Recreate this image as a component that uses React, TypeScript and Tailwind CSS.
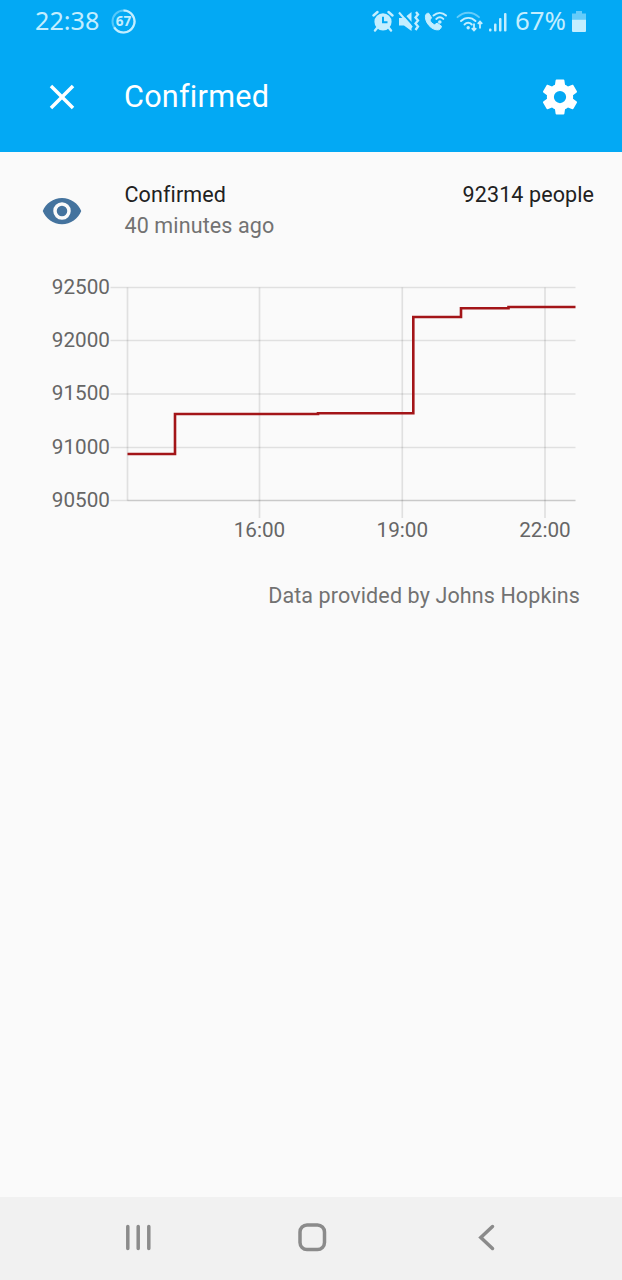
import React from "react";

interface Tick {
  label: string;
  pos: number;
}

// Positions are relative to the chart's svg
const yTicks: Tick[] = [
  { label: "92500", pos: 17.5 },
  { label: "92000", pos: 70.5 },
  { label: "91500", pos: 124 },
  { label: "91000", pos: 177.5 },
  { label: "90500", pos: 230.5 },
];

const xTicks: Tick[] = [
  { label: "16:00", pos: 259.5 },
  { label: "19:00", pos: 402.3 },
  { label: "22:00", pos: 545 },
];

const AlarmIcon = () => (
  <svg width="22" height="24" viewBox="0 0 22 24" fill="none">
    <circle cx="11" cy="11.8" r="8.600" fill="#c3eeff" />
    <path
      d="M1.500 5.500 5.500 2M20.500 5.500 16.500 2M5 18l-2 2.500M17 18l2 2.500"
      stroke="#c3eeff"
      strokeWidth="2.400"
      strokeLinecap="round"
    />
    <path d="M11 6.800V12.300h4.500" stroke="#03a9f4" strokeWidth="2" />
  </svg>
);

const VibrateIcon = () => (
  <svg width="22" height="24" viewBox="0 0 22 24" fill="none">
    <path d="M1 8h5l7.500-6v19L6 15.500H1z" fill="#c3eeff" />
    <path d="M2 .500 15 15" stroke="#03a9f4" strokeWidth="2" />
    <path d="M0 .500H6L4.500 5H0z" fill="#03a9f4" />
    <path d="m1 2.500 13 15" stroke="#c3eeff" strokeWidth="2" />
    <path
      d="m18 2 2 2.500-2.500 3 2.500 3-2.500 3 2.500 3-2.500 3.500"
      stroke="#c3eeff"
      strokeWidth="2.300"
    />
  </svg>
);

const WifiCallIcon = () => (
  <svg width="24" height="24" viewBox="0 0 24 24" fill="none">
    <path
      d="M1.500 5.200c.6-1.400 2-2.200 3.200-2l2.900 4.500-1.700 2.300c.9 2.300 2.500 3.900 4.700 4.800l2.500-1.700 4.300 3c0 1.700-1 3.200-2.700 3.700C7.800 21 .200 12 1.500 5.200z"
      fill="#c3eeff"
      stroke="#c3eeff"
      strokeWidth="1"
      strokeLinejoin="round"
    />
    <path
      d="M9.500 5.500c3.800-3.400 8.800-3.400 12.500 0M12.300 8.900c2.200-2 4.900-2 7 0"
      stroke="#c3eeff"
      strokeWidth="2"
      strokeLinecap="round"
    />
    <circle cx="15.800" cy="12" r="1.800" fill="#c3eeff" />
  </svg>
);

const WifiIcon = () => (
  <svg width="29" height="24" viewBox="0 0 29 24" fill="none">
    <g strokeWidth="1.900" strokeLinecap="round">
      <path d="M1.500 7.200c6-6 15.500-6 21.500 0" stroke="#64ccfa" />
      <path
        d="M5 11c4.300-4.200 10.300-4.200 14.500 0M8.500 14.500c2.300-2.300 5-2.300 7.300 0"
        stroke="#c3eeff"
      />
    </g>
    <circle cx="12.200" cy="17.800" r="1.700" fill="#c3eeff" />
    <path
      d="M18 13.500v7m-2.200-2.400 2.200 2.400 2.200-2.400M24 18.500v-7m-2.200 2.400 2.200-2.400 2.200 2.400"
      stroke="#c3eeff"
      strokeWidth="1.800"
    />
  </svg>
);

const StatusBar = () => (
  <div className="flex h-11 items-center pl-[35px] text-[#c3eeff] font-['Noto_Sans',sans-serif]">
    <span className="mb-0.5 w-[65px] text-[25.200px] leading-none">22:38</span>
    <svg className="mb-px ml-[11px]" width="25" height="25" viewBox="0 0 25 25">
      <circle cx="12.500" cy="12.500" r="11" fill="none" stroke="#55c8fa" strokeWidth="2" />
      <path
        d="M12.500 1.500a11 11 0 1 1-9.300 16.900"
        fill="none"
        stroke="#c3eeff"
        strokeWidth="2.200"
      />
      <text x="12.500" y="17.200" textAnchor="middle" fontSize="13.500" fontWeight="700" fill="#c3eeff">
        67
      </text>
    </svg>
    <div className="ml-[236px] flex items-center">
      <AlarmIcon />
      <span className="ml-1">
        <VibrateIcon />
      </span>
      <span className="ml-1">
        <WifiCallIcon />
      </span>
      <span className="ml-2">
        <WifiIcon />
      </span>
    </div>
    <svg className="ml-[3px]" width="20" height="20" viewBox="0 0 20 20" fill="#c3eeff">
      <rect x="1" y="16.500" width="2.500" height="3" rx="1" />
      <rect x="6" y="11.500" width="2.500" height="8" rx="1" />
      <rect x="11" y="6" width="2.500" height="13.500" rx="1" />
      <rect x="16" y="1" width="2.500" height="18.500" rx="1" />
    </svg>
    <span className="mb-0.5 ml-[7px] w-[53px] text-[25.800px] leading-none">67%</span>
    <svg className="ml-1" width="14" height="22" viewBox="0 0 14 22">
      <path d="M4 0h6v2.500h4V8.500H0V2.500h4z" fill="#64ccfa" />
      <path d="M0 8.500h14V20a1 1 0 0 1-1 1H1a1 1 0 0 1-1-1z" fill="#c3eeff" />
    </svg>
  </div>
);

const Header = () => (
  <header className="h-[152px] bg-[#03a9f4] text-white">
    <StatusBar />
    <div className="flex h-[106px] items-center pr-[41px] pl-[41px]">
      <button aria-label="Close">
        <svg width="42" height="42" viewBox="0 0 24 24" fill="currentColor">
          <path d="M19 6.410 17.590 5 12 10.590 6.410 5 5 6.410 10.590 12 5 17.590 6.410 19 12 13.410 17.590 19 19 17.590 13.410 12z" />
        </svg>
      </button>
      <h1 className="ml-[41px] text-[30.600px] leading-none tracking-[0.24px]">Confirmed</h1>
      <button aria-label="Settings" className="ml-auto">
        <svg width="42" height="42" viewBox="0 0 24 24" fill="currentColor">
          <path d="M12 15.500A3.500 3.500 0 0 1 8.500 12 3.500 3.500 0 0 1 12 8.500a3.500 3.500 0 0 1 3.500 3.500 3.500 3.500 0 0 1-3.500 3.500m7.430-2.530c.04-.32.07-.64.07-.97s-.03-.66-.07-1l2.110-1.630c.19-.15.24-.42.12-.64l-2-3.460c-.12-.22-.39-.31-.61-.22l-2.490 1c-.52-.39-1.060-.73-1.690-.98l-.37-2.650A.506.506 0 0 0 14 2h-4c-.25 0-.46.18-.5.42l-.37 2.650c-.63.25-1.170.59-1.690.98l-2.490-1c-.22-.09-.49 0-.61.22l-2 3.460c-.13.22-.07.49.12.64L4.570 11c-.04.34-.07.67-.07 1s.03.65.07.97l-2.110 1.660c-.19.15-.25.42-.12.64l2 3.460c.12.22.39.3.61.22l2.490-1.010c.52.4 1.060.74 1.690.99l.37 2.650c.04.24.25.42.5.42h4c.25 0 .46-.18.5-.42l.37-2.650c.63-.26 1.170-.59 1.690-.99l2.490 1.010c.22.08.49 0 .61-.22l2-3.460c.12-.22.07-.49-.12-.64z" />
        </svg>
      </button>
    </div>
  </header>
);

const StateInfo = () => (
  <section className="flex pt-[27px] pr-[28px] pl-[41px]">
    <svg className="mt-[11px]" width="42" height="42" viewBox="0 0 24 24" fill="#44739e">
      <path d="M12 9a3 3 0 0 0-3 3 3 3 0 0 0 3 3 3 3 0 0 0 3-3 3 3 0 0 0-3-3m0 8a5 5 0 0 1-5-5 5 5 0 0 1 5-5 5 5 0 0 1 5 5 5 5 0 0 1-5 5m0-12.500C7 4.500 2.730 7.610 1 12c1.730 4.390 6 7.500 11 7.500s9.270-3.110 11-7.500c-1.730-4.390-6-7.500-11-7.500" />
    </svg>
    <div className="ml-[41.500px] text-[21.500px] leading-[31px] tracking-[0.12px]">
      <div className="text-[#212121]">Confirmed</div>
      <div className="text-[#727272]">40 minutes ago</div>
    </div>
    <div className="ml-auto text-[21.500px] leading-[31px] tracking-[0.1px] text-[#212121]">
      92314 people
    </div>
  </section>
);

const HistoryChart = () => (
  <svg className="mt-[29px] block" width="622" height="280" viewBox="0 0 622 280">
    <g stroke="#000" strokeOpacity="0.100" strokeWidth="1.700">
      {yTicks.map((tick) => (
        <path key={tick.label} d={`M110.500 ${tick.pos}H575.500`} />
      ))}
      {xTicks.map((tick) => (
        <path key={tick.label} d={`M${tick.pos} 17.500V248`} />
      ))}
      <path d="M127.500 17.500V230.500" />
      <path d="M127.500 230.500H575.500" />
    </g>
    <g fontSize="20.700" fill="#666">
      {yTicks.map((tick) => (
        <text key={tick.label} x="110" y={tick.pos + 6} textAnchor="end">
          {tick.label}
        </text>
      ))}
      {xTicks.map((tick) => (
        <text key={tick.label} x={tick.pos} y="267" textAnchor="middle">
          {tick.label}
        </text>
      ))}
    </g>
    <path
      d="M127.500 184H175V144H318V143.300H413.300V47H461V38.300H508.500V37H575.500"
      fill="none"
      stroke="#a31518"
      strokeWidth="2.600"
    />
  </svg>
);

const NavBar = () => (
  <nav className="mt-auto h-[83px] bg-[#f1f1f1]">
    <svg width="622" height="83" viewBox="0 0 622 83" fill="none" stroke="#8b8b8b">
      <g strokeWidth="3.500" strokeLinecap="round">
        <path d="M127.800 29.500V51.500M138.200 29.500V51.500M148.800 29.500V51.500" />
        <path d="M492.500 29.500 480.800 40.500 492.500 51.500" />
      </g>
      <rect x="300" y="28" width="24.500" height="24.500" rx="7" strokeWidth="3.500" />
    </svg>
  </nav>
);

export default function App() {
  return (
    <div className="flex h-[1280px] w-[622px] flex-col overflow-hidden bg-[#fafafa] font-[Roboto,sans-serif]">
      <Header />
      <StateInfo />
      <HistoryChart />
      <p className="mt-[30px] pr-[42px] text-right text-[21.500px] leading-[31px] tracking-[0.12px] text-[#727272]">
        Data provided by Johns Hopkins
      </p>
      <NavBar />
    </div>
  );
}
